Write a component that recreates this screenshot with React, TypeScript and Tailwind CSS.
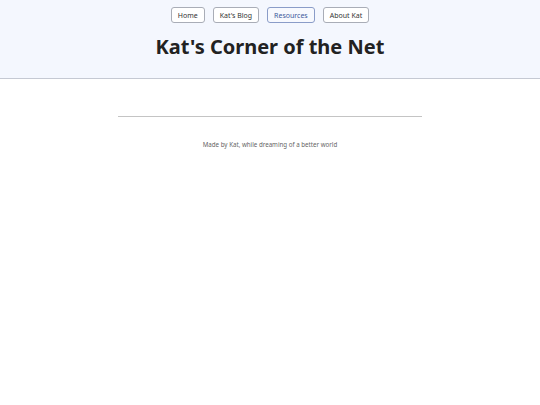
import React from 'react';

const links = ['Home', "Kat's Blog", 'Resources', 'About Kat'];

export default function App() {
  return (
    <div className="min-h-screen bg-white" style={{ fontFamily: '"Noto Sans", sans-serif' }}>
      {/* Header */}
      <header className="h-[79px] bg-[#f4f7fe] border-b border-[#c5c9d3] flex flex-col items-center">
        <nav className="flex gap-[8px] mt-[7px]">
          {links.map((l) => (
            <button
              key={l}
              className={`h-[16px] px-[6px] rounded-[3px] border text-[7px] font-normal leading-none ${
                l === 'Resources'
                  ? 'border-[#8a9cc8] text-[#3d5a9c] bg-[#f7f9fe]'
                  : 'border-[#a9adb7] text-[#333] bg-white'
              }`}
            >
              {l}
            </button>
          ))}
        </nav>
        <h1 className="mt-[14px] text-[20px] font-bold text-[#222] leading-none">Kat's Corner of the Net</h1>
      </header>

      {/* Body */}
      <main className="flex flex-col items-center">
        <hr className="w-[304px] mt-[37px] border-t border-[#c4c4c4]" />
        <p className="mt-[25px] text-[6.2px] text-[#666] leading-none">Made by Kat, while dreaming of a better world</p>
      </main>
    </div>
  );
}
